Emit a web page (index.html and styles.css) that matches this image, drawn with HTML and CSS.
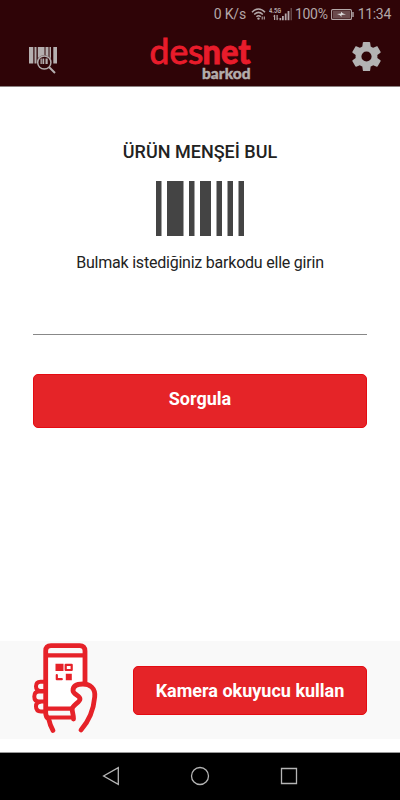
FILE: index.html
```html
<!DOCTYPE html>
<html lang="tr">
<head>
    <meta charset="UTF-8">
    <meta name="viewport" content="width=device-width, initial-scale=1.0">
    <title>Desnet Barkod</title>
    <link rel="stylesheet" href="styles.css">
</head>
<body>
    <header class="top">
        <div class="status-bar">
            <span class="speed">0 K/s</span>
            <svg class="wifi" width="16" height="12" viewBox="0 0 16 12" fill="none" stroke="currentColor" stroke-width="1.5">
                <path d="M1 4.2C5-.2 10-.2 14 4.2M3.2 6.500c2.800-2.800 5.800-2.800 8.600 0M5.400 8.800c1.400-1.400 3-1.400 4.400 0"/>
                <circle cx="7.500" cy="10.600" r="1.200" fill="currentColor" stroke="none"/>
                <path d="M11.200 8.500v3M13.300 8.500v3" stroke-width="1.100"/>
            </svg>
            <svg class="signal" width="23" height="14" viewBox="0 0 23 14" fill="currentColor">
                <text class="net-type" x="0" y="6" textLength="12" lengthAdjust="spacingAndGlyphs">4.5G</text>
                <path d="M5 8h1.200v5H5zM4 9.500L5.500 7.500 6 9.500zM7.500 8h1.200v5H7.500zM7.500 11.500h2L8 13.500zM10.500 11h1.700v2.300h-1.700zM13 9h1.800v4.300H13zM15.800 6.500h1.800v6.800h-1.800zM18.600 4h1.800v9.300h-1.800z"/>
                <path d="M21.500 1H23v12.300h-1.500z" opacity=".4"/>
            </svg>
            <span class="percent">100%</span>
            <svg class="battery" width="23" height="11" viewBox="0 0 23 11">
                <rect x=".6" y=".6" width="19.800" height="9.800" rx="1" fill="none" stroke="currentColor" stroke-width="1.100"/>
                <rect x="2" y="2" width="17" height="7" fill="#6b4b4d"/>
                <path d="M21.300 3h1.400v5h-1.400z" fill="currentColor"/>
                <path d="M6 5l4-.5V2.800L12 4.600l3 .9-4.500.6v1.800L9 6.200z" fill="#ddd"/>
            </svg>
            <span class="clock">11:34</span>
        </div>
        <div class="app-bar">
            <svg class="scan-icon" width="28" height="28" viewBox="0 0 28 28" fill="#b5afaf">
                <path d="M0 0h4.300v16.500H0zM5.500 0h2v16.500h-2zM8.800 0h6.700v16.500H8.800zM16.500 0h3v16.500h-3zM20.500 0H22v16.500h-1.500zM24.300 0H28v16.500h-3.700z"/>
                <circle cx="15.300" cy="15.500" r="7.300" fill="#2f0407"/>
                <path d="M11.500 11.500h1.300v5.500h-1.300zM13.500 11.500h1.700v5.500h-1.700zM16.500 11.500h2.200v5.500h-2.200z"/>
                <circle cx="15.300" cy="15.500" r="6.600" fill="none" stroke="#b5afaf" stroke-width="1.500"/>
                <path d="M20 20l6 6" stroke="#b5afaf" stroke-width="2"/>
            </svg>
            <svg class="logo" width="102" height="44" viewBox="0 0 102 44">
                <text class="logo-des" x="-.5" y="26.300" textLength="54" lengthAdjust="spacingAndGlyphs">des</text>
                <text class="logo-net" x="52.500" y="26.300" textLength="48" lengthAdjust="spacingAndGlyphs">net</text>
                <text class="logo-sub" x="52" y="40.700" textLength="48.500" lengthAdjust="spacingAndGlyphs">barkod</text>
            </svg>
            <svg class="gear" width="35" height="35" viewBox="0 0 24 24" fill="#b3b3b3">
                <path d="M19.430 12.980c.04-.32.07-.64.07-.98s-.03-.66-.07-.98l2.110-1.650c.19-.15.24-.42.12-.64l-2-3.460c-.12-.22-.39-.3-.61-.22l-2.490 1c-.52-.4-1.080-.73-1.690-.98l-.38-2.650A.49.49 0 0 0 14 2h-4c-.25 0-.46.18-.49.42l-.38 2.650c-.61.25-1.170.59-1.690.98l-2.490-1c-.23-.09-.49 0-.61.22l-2 3.460c-.13.22-.07.49.12.64l2.110 1.650c-.04.32-.07.65-.07.98s.03.66.07.98l-2.110 1.650c-.19.15-.24.42-.12.64l2 3.460c.12.22.39.3.61.22l2.490-1c.52.4 1.080.73 1.690.98l.38 2.650c.03.24.24.42.49.42h4c.25 0 .46-.18.49-.42l.38-2.650c.61-.25 1.170-.59 1.690-.98l2.490 1c.23.09.49 0 .61-.22l2-3.460c.12-.22.07-.49-.12-.64zM12 15.500a3.500 3.500 0 1 1 0-7 3.500 3.500 0 0 1 0 7z"/>
            </svg>
        </div>
    </header>

    <main class="content">
        <h1 class="title">ÜRÜN MENŞEİ BUL</h1>
        <svg class="barcode" width="88" height="55" viewBox="0 0 16 10" fill="#444">
            <path d="M0 0h1v10H0zM2 0h3v10H2zM6 0h1v10H6zM8 0h2v10H8zM11 0h1v10h-1zM13 0h1v10h-1zM15 0h1v10h-1z"/>
        </svg>
        <label class="hint" for="barcode">Bulmak istediğiniz barkodu elle girin</label>
        <input class="barcode-input" type="text" id="barcode">
        <button class="btn btn-query" type="button">Sorgula</button>
    </main>

    <section class="camera">
        <svg class="hand-phone" width="68" height="92" viewBox="0 0 68 92" fill="none" stroke="#e62229" stroke-width="4.800" stroke-linecap="round" stroke-linejoin="round">
            <path d="M15 68V12h39v56z" fill="#fff" stroke="none"/>
            <path d="M54 42V9q0-5.300-5.300-5.300H20q-5.300 0-5.300 5.300v62q0 4 3 6 1.500 7 4.300 11.500"/>
            <path d="M15 13.300h38M15 66.700h26M18 75.500h24" stroke-width="4.200"/>
            <path d="M14 39.700H9.500q-4.500 0-4.500 4.600t4.500 4.600H14M12 49.500H8q-4.700 0-4.700 5t4.700 5h5M10 59.800q-5 0-5 4.800t5 4.800h4" stroke-width="4"/>
            <path d="M50 88C57 80 62.500 69 63.700 55c1-9-5-13-11.700-13-6 0-10 2-10 6.500 0 4 7 5 7 8.500s-7.500 6-7.800 10c-.2 3 1.800 5 1.800 10z" fill="#f9f9f9" stroke="none"/>
            <path d="M50 88C57 80 62.500 69 63.700 55c1-9-5-13-11.700-13-6 0-10 2-10 6.500 0 4 7 5 7 8.500s-7.500 6-7.800 10c-.2 3 1.300 5 1.300 10"/>
            <path d="M24.500 21.700h8v7.300h-8zM34.800 31.800h6v6.400h-6z" fill="#e62229" stroke="none"/>
            <path d="M34.700 22.800h6v5.200h-6zM25.800 33v4.200h5" stroke-width="2.200"/>
        </svg>
        <button class="btn btn-camera" type="button">Kamera okuyucu kullan</button>
    </section>

    <nav class="nav-bar">
        <svg width="18" height="20" viewBox="0 0 18 20"><path d="M16.300 1.700v16.600L1.600 10z"/></svg>
        <svg width="20" height="20" viewBox="0 0 20 20"><circle cx="10" cy="10" r="8.500"/></svg>
        <svg width="18" height="18" viewBox="0 0 18 18"><path d="M1.500 1.500h15v15h-15z"/></svg>
    </nav>
</body>
</html>
```
FILE: styles.css
```css
* { box-sizing: border-box; }
body { margin: 0; height: 800px; display: flex; flex-direction: column; background: #fff; font-family: Roboto, sans-serif; color: #222; overflow: hidden; }
svg { display: block; flex: none; }

.top { height: 87px; background: #2f0407; border-bottom: 1px solid #8b8080; }
.status-bar { height: 28px; padding-right: 9px; display: flex; align-items: center; justify-content: flex-end; color: #b3a7a8; font-size: 14px; letter-spacing: -.3px; }
.speed { margin-right: 5px; letter-spacing: -.2px; }
.wifi { margin-right: 2px; }
.signal { margin-right: 3px; }
.net-type { font-size: 7px; font-weight: bold; letter-spacing: 0; }
.percent { margin-right: 3px; }
.battery { margin-right: 4px; }

.app-bar { height: 58px; padding: 0 16px 0 29px; display: flex; }
.scan-icon { margin-top: 19px; }
.logo { margin: 10px auto 0 93px; overflow: visible; font-family: Lato, sans-serif; }
.logo-des { font-size: 34px; fill: #e81c2b; stroke: #e81c2b; stroke-width: .9px; }
.logo-net { font-size: 34px; font-weight: 900; fill: #e81c2b; stroke: #e81c2b; stroke-width: .8px; }
.logo-sub { font-size: 15.5px; font-weight: 900; fill: #b3acac; stroke: #b3acac; stroke-width: .4px; }
.gear { margin-top: 11px; }

.content { flex: 1; padding: 53px 33px 0; display: flex; flex-direction: column; align-items: center; }
.title { margin: 0 0 18px; font-size: 18px; line-height: 23px; font-weight: 500; }
.hint { margin-top: 16px; font-size: 16px; line-height: 22px; letter-spacing: -.22px; }
.barcode-input { width: 100%; height: 61px; border: 0; border-bottom: 1px solid #888; outline: none; background: none; font-size: 16px; }
.btn { border: 1px solid #e50b12; border-radius: 5px; background: #e52428; color: #fff; font-family: inherit; font-size: 18px; font-weight: bold; }
.btn-query { width: 100%; height: 54px; margin-top: 39px; padding-bottom: 6px; }

.camera { height: 98px; margin-bottom: 13px; padding: 0 33px 0 31px; display: flex; justify-content: space-between; background: #f9f9f9; }
.hand-phone { margin-top: 1px; }
.btn-camera { width: 234px; height: 49px; margin-top: 25px; }

.nav-bar { height: 48px; padding: 0 102px 1px; display: flex; align-items: center; justify-content: space-between; background: #000; border-top: 1px solid #999; }
.nav-bar svg { fill: none; stroke: #b5b5b5; stroke-width: 1.3; }
```
